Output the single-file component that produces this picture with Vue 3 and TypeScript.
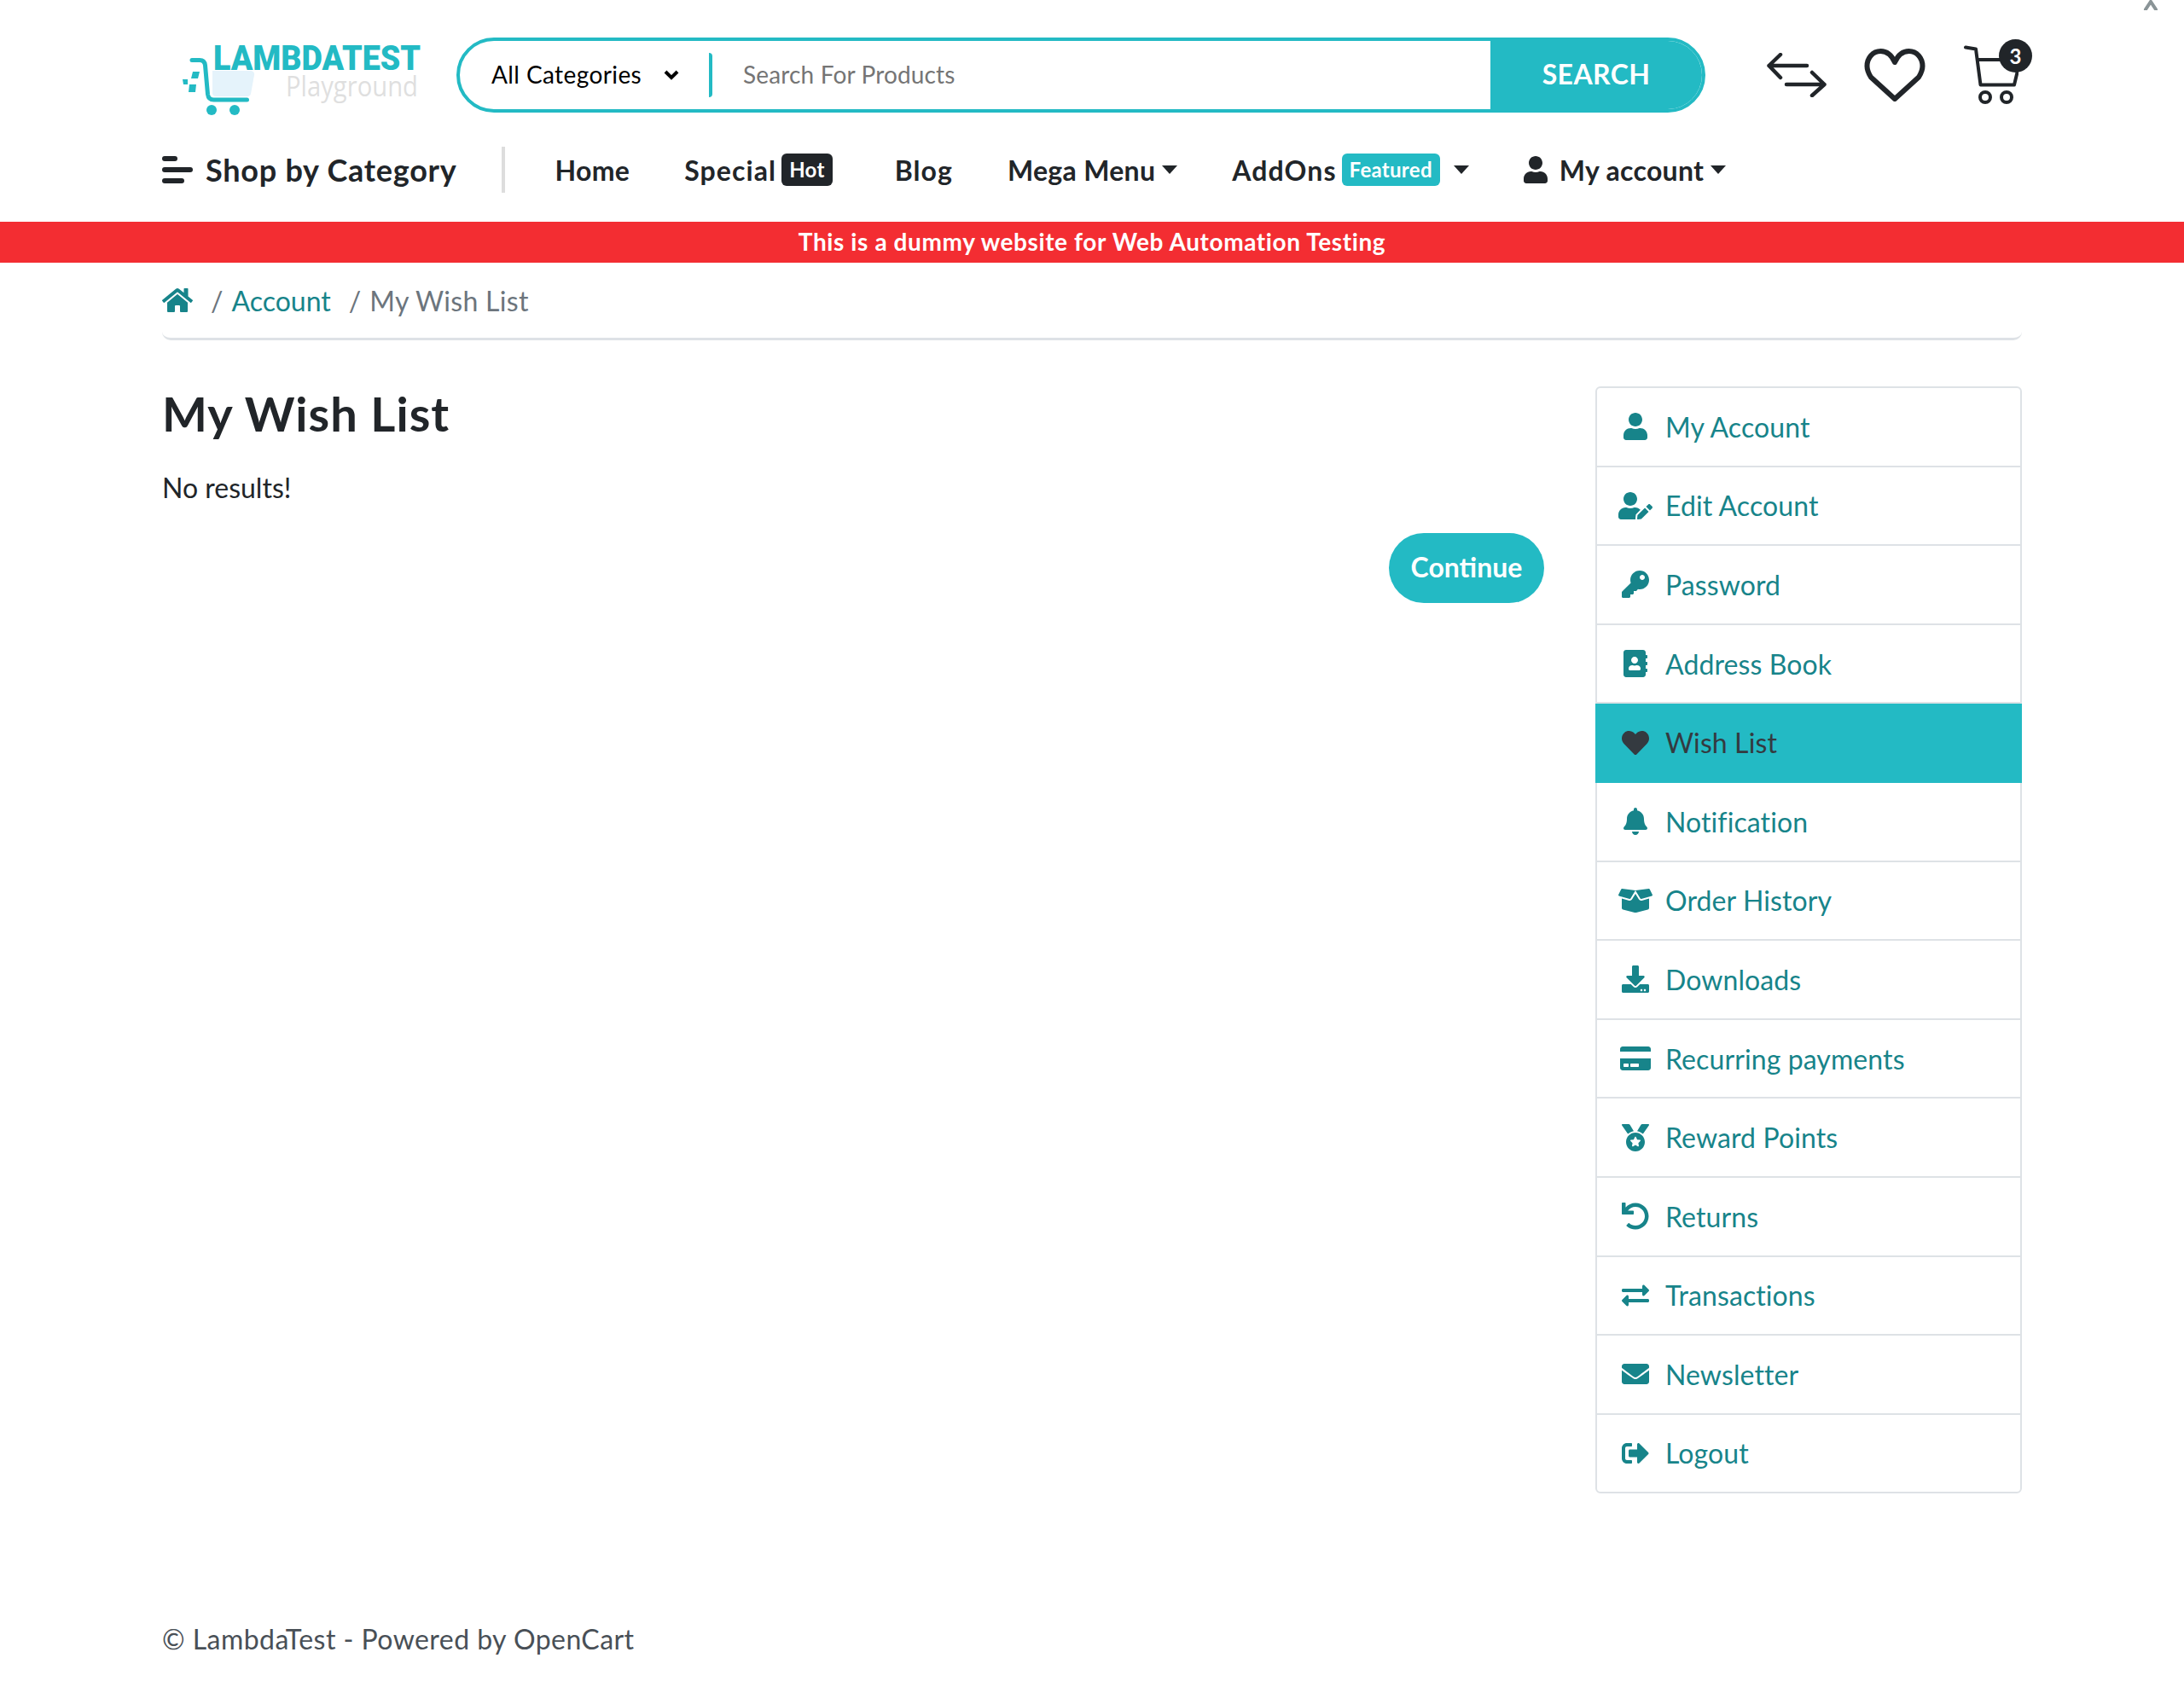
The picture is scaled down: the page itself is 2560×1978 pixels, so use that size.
<script setup lang="ts">
interface MenuItem {
  label: string
  box: string
  d: string
  active?: boolean
}

const userPath =
  'M224 256c70.7 0 128-57.3 128-128S294.7 0 224 0 96 57.3 96 128s57.3 128 128 128zm89.6 32h-16.7c-22.2 10.2-46.9 16-72.9 16s-50.6-5.8-72.9-16h-16.7C60.2 288 0 348.2 0 422.4V464c0 26.5 21.5 48 48 48h352c26.5 0 48-21.5 48-48v-41.6c0-74.2-60.2-134.4-134.4-134.4z'

const homePath =
  'M280.37 148.26L96 300.11V464a16 16 0 0 0 16 16l112.06-.29a16 16 0 0 0 15.92-16V368a16 16 0 0 1 16-16h64a16 16 0 0 1 16 16v95.64a16 16 0 0 0 16 16.05L464 480a16 16 0 0 0 16-16V300L295.67 148.26a12.19 12.19 0 0 0-15.3 0zM571.6 251.47L488 182.56V44.05a12 12 0 0 0-12-12h-56a12 12 0 0 0-12 12v72.61L318.47 43a48 48 0 0 0-61 0L4.34 251.47a12 12 0 0 0-1.6 16.9l25.5 31A12 12 0 0 0 45.15 301l235.22-193.74a12.19 12.19 0 0 1 15.3 0L530.9 301a12 12 0 0 0 16.9-1.6l25.5-31a12 12 0 0 0-1.7-16.93z'

const menu: MenuItem[] = [
  { label: 'My Account', box: '0 0 448 512', d: userPath },
  {
    label: 'Edit Account',
    box: '0 0 640 512',
    d: 'M224 256c70.7 0 128-57.3 128-128S294.7 0 224 0 96 57.3 96 128s57.3 128 128 128zm89.6 32h-16.7c-22.2 10.2-46.9 16-72.9 16s-50.6-5.8-72.9-16h-16.7C60.2 288 0 348.2 0 422.4V464c0 26.5 21.5 48 48 48h274.9c-2.4-6.8-3.4-14-2.6-21.3l6.8-60.9 1.2-11.1 7.9-7.9 77.3-77.3c-24.5-27.7-60-45.5-99.9-45.5zm45.3 145.3l-6.8 61c-1.1 10.2 7.5 18.8 17.6 17.6l60.9-6.8 137.9-137.9-71.7-71.7-137.9 137.8zM633 268.9L595.1 231c-9.3-9.3-24.5-9.3-33.8 0l-37.8 37.8-4.1 4.1 71.8 71.7 41.8-41.8c9.3-9.4 9.3-24.5 0-33.9z',
  },
  {
    label: 'Password',
    box: '0 0 512 512',
    d: 'M512 176.001C512 273.203 433.202 352 336 352c-11.22 0-22.19-1.062-32.827-3.069l-24.012 27.014A23.999 23.999 0 0 1 261.223 384H224v40c0 13.255-10.745 24-24 24h-40v40c0 13.255-10.745 24-24 24H24c-13.255 0-24-10.745-24-24v-78.059c0-6.365 2.529-12.47 7.029-16.971l161.802-161.802C163.108 213.814 160 195.271 160 176 160 78.798 238.797.001 335.999 0 433.488-.001 512 78.511 512 176.001zM336 128c0 26.51 21.49 48 48 48s48-21.49 48-48-21.49-48-48-48-48 21.49-48 48z',
  },
  {
    label: 'Address Book',
    box: '0 0 448 512',
    d: 'M436 160c6.6 0 12-5.4 12-12v-40c0-6.6-5.4-12-12-12h-20V48c0-26.5-21.5-48-48-48H48C21.5 0 0 21.5 0 48v416c0 26.5 21.5 48 48 48h320c26.5 0 48-21.5 48-48v-48h20c6.6 0 12-5.4 12-12v-40c0-6.6-5.4-12-12-12h-20v-64h20c6.6 0 12-5.4 12-12v-40c0-6.6-5.4-12-12-12h-20v-64h20zm-228-32c35.3 0 64 28.7 64 64s-28.7 64-64 64-64-28.7-64-64 28.7-64 64-64zm112 236.8c0 10.6-10 19.2-22.4 19.2H118.4C106 384 96 375.4 96 364.8v-19.2c0-31.8 30.1-57.6 67.2-57.6h5c12.3 5.1 25.7 8 39.8 8s27.6-2.9 39.8-8h5c37.1 0 67.2 25.8 67.2 57.6v19.2z',
  },
  {
    label: 'Wish List',
    box: '0 0 512 512',
    active: true,
    d: 'M462.3 62.6C407.5 15.9 326 24.3 275.7 76.2L256 96.5l-19.7-20.3C186.1 24.3 104.5 15.9 49.7 62.6c-62.8 53.6-66.1 149.8-9.9 207.9l193.5 199.8c12.5 12.9 32.8 12.9 45.3 0l193.5-199.8c56.3-58.1 53-154.3-9.8-207.9z',
  },
  {
    label: 'Notification',
    box: '0 0 448 512',
    d: 'M224 512c35.32 0 63.97-28.65 63.97-64H160.03c0 35.35 28.65 64 63.97 64zm215.39-149.71c-19.32-20.76-55.47-51.99-55.47-154.29 0-77.7-54.48-139.9-127.94-155.16V32c0-17.67-14.32-32-31.98-32s-31.98 14.33-31.98 32v20.84C118.56 68.1 64.08 130.3 64.08 208c0 102.3-36.15 133.53-55.47 154.29-6 6.45-8.66 14.16-8.61 21.71.11 16.4 12.98 32 32.1 32h383.8c19.12 0 32-15.6 32.1-32 .05-7.55-2.61-15.27-8.61-21.71z',
  },
  {
    label: 'Order History',
    box: '0 0 640 512',
    d: 'M425.7 256c-16.9 0-32.8-9-41.4-23.4L320 126l-64.2 106.6c-8.7 14.5-24.6 23.5-41.5 23.5-4.5 0-9-.6-13.3-1.9L64 215v178c0 14.7 10 27.5 24.2 31l216.2 54.1c10.2 2.5 20.9 2.5 31 0L551.8 424c14.2-3.6 24.2-16.4 24.2-31V215l-137 39.1c-4.3 1.3-8.8 1.9-13.3 1.9zm212.6-112.2L586.8 41c-3.1-6.2-9.8-9.8-16.7-8.9L320 64l91.7 152.1c3.8 6.3 11.4 9.3 18.5 7.3l197.9-56.5c9.9-2.9 14.7-13.9 10.2-23.1zM53.2 41L1.7 143.8c-4.6 9.2.3 20.2 10.1 23l197.9 56.5c7.1 2 14.7-1 18.5-7.3L320 64 69.8 32.1c-6.9-.8-13.5 2.7-16.6 8.9z',
  },
  {
    label: 'Downloads',
    box: '0 0 512 512',
    d: 'M216 0h80c13.3 0 24 10.7 24 24v168h87.7c17.8 0 26.7 21.5 14.1 34.1L269.7 378.3c-7.5 7.5-19.8 7.5-27.3 0L90.1 226.1c-12.6-12.6-3.7-34.1 14.1-34.1H192V24c0-13.3 10.7-24 24-24zm296 376v112c0 13.3-10.7 24-24 24H24c-13.3 0-24-10.7-24-24V376c0-13.3 10.7-24 24-24h146.7l49 49c20.1 20.1 52.5 20.1 72.6 0l49-49H488c13.3 0 24 10.7 24 24zm-124 88c0-11-9-20-20-20s-20 9-20 20 9 20 20 20 20-9 20-20zm64 0c0-11-9-20-20-20s-20 9-20 20 9 20 20 20 20-9 20-20z',
  },
  {
    label: 'Recurring payments',
    box: '0 0 576 512',
    d: 'M0 432c0 26.5 21.5 48 48 48h480c26.5 0 48-21.5 48-48V256H0v176zm192-68c0-6.6 5.4-12 12-12h136c6.6 0 12 5.4 12 12v40c0 6.6-5.4 12-12 12H204c-6.6 0-12-5.4-12-12v-40zm-128 0c0-6.6 5.4-12 12-12h72c6.6 0 12 5.4 12 12v40c0 6.6-5.4 12-12 12H76c-6.6 0-12-5.4-12-12v-40zM576 80v48H0V80c0-26.5 21.5-48 48-48h480c26.5 0 48 21.5 48 48z',
  },
  {
    label: 'Reward Points',
    box: '0 0 512 512',
    d: 'M223.75 130.75L154.62 15.54A31.997 31.997 0 0 0 127.18 0H16.03C3.08 0-4.5 14.57 2.92 25.18l111.27 158.96c29.72-27.77 67.52-46.83 109.56-53.39zM495.97 0H384.82c-11.24 0-21.66 5.9-27.44 15.54l-69.13 115.21c42.04 6.56 79.84 25.62 109.56 53.38L509.08 25.18C516.5 14.57 508.92 0 495.97 0zM256 160c-97.2 0-176 78.8-176 176s78.8 176 176 176 176-78.8 176-176-78.8-176-176-176zm92.52 157.26l-37.93 36.96 8.97 52.22c1.6 9.36-8.26 16.51-16.65 12.09L256 393.88l-46.9 24.65c-8.4 4.45-18.25-2.74-16.65-12.09l8.97-52.22-37.93-36.96c-6.82-6.64-3.05-18.23 6.35-19.59l52.43-7.64 23.43-47.52c2.11-4.28 6.19-6.39 10.28-6.39 4.11 0 8.22 2.14 10.33 6.39l23.43 47.52 52.43 7.64c9.4 1.36 13.17 12.95 6.35 19.59z',
  },
  {
    label: 'Returns',
    box: '0 0 512 512',
    d: 'M212.333 224.333H12c-6.627 0-12-5.373-12-12V12C0 5.373 5.373 0 12 0h48c6.627 0 12 5.373 12 12v78.112C117.773 39.279 184.26 7.47 258.175 8.007c136.906.994 246.448 111.623 246.157 248.532C504.041 393.258 393.12 504 256.333 504c-64.089 0-122.496-24.313-166.51-64.215-5.099-4.622-5.334-12.554-.467-17.42l33.967-33.967c4.474-4.474 11.662-4.717 16.401-.525C170.76 415.336 211.58 432 256.333 432c97.268 0 176-78.716 176-176 0-97.267-78.716-176-176-176-58.496 0-110.28 28.476-142.274 72.333h98.274c6.627 0 12 5.373 12 12v48c0 6.627-5.373 12-12 12z',
  },
  {
    label: 'Transactions',
    box: '0 0 512 512',
    d: 'M0 168v-16c0-13.255 10.745-24 24-24h360V80c0-21.367 25.899-32.042 40.971-16.971l80 80c9.372 9.373 9.372 24.569 0 33.941l-80 80C409.956 271.982 384 261.456 384 240v-48H24c-13.255 0-24-10.745-24-24zm488 152H128v-48c0-21.314-25.862-32.08-40.971-16.971l-80 80c-9.372 9.373-9.372 24.569 0 33.941l80 80C102.057 463.997 128 453.437 128 432v-48h360c13.255 0 24-10.745 24-24v-16c0-13.255-10.745-24-24-24z',
  },
  {
    label: 'Newsletter',
    box: '0 0 512 512',
    d: 'M502.3 190.8c3.9-3.1 9.7-.2 9.7 4.7V400c0 26.5-21.5 48-48 48H48c-26.5 0-48-21.5-48-48V195.6c0-5 5.7-7.8 9.7-4.7 22.4 17.4 52.1 39.5 154.1 113.6 21.1 15.4 56.7 47.8 92.2 47.6 35.7.3 72-32.8 92.3-47.6 102-74.1 131.6-96.3 154-113.7zM256 320c23.2.4 56.6-29.2 73.4-41.4 132.7-96.3 142.8-104.7 173.4-128.7 5.8-4.5 9.2-11.5 9.2-18.9v-19c0-26.5-21.5-48-48-48H48C21.5 64 0 85.5 0 112v19c0 7.4 3.4 14.3 9.2 18.9 30.6 23.9 40.7 32.4 173.4 128.7 16.8 12.2 50.2 41.8 73.4 41.4z',
  },
  {
    label: 'Logout',
    box: '0 0 512 512',
    d: 'M497 273L329 441c-15 15-41 4.5-41-17v-96H152c-13.3 0-24-10.7-24-24v-96c0-13.3 10.7-24 24-24h136V88c0-21.4 25.9-32 41-17l168 168c9.3 9.4 9.3 24.6 0 34zM192 436v-40c0-6.6-5.4-12-12-12H96c-17.7 0-32-14.3-32-32V160c0-17.7 14.3-32 32-32h84c6.6 0 12-5.4 12-12V76c0-6.6-5.4-12-12-12H96c-53 0-96 43-96 96v192c0 53 43 96 96 96h84c6.6 0 12-5.4 12-12z',
  },
]
</script>

<template>
  <div class="page">
    <svg class="close-x" viewBox="0 0 18 12" width="18" height="12">
      <path d="M3 11 9 2l6 9" fill="none" stroke="#8a9497" stroke-width="4" stroke-linecap="round" />
    </svg>

    <header class="wrap">
      <div class="top-row">
        <svg class="logo" viewBox="0 0 290 90" width="290" height="90" role="img" aria-label="LambdaTest Playground">
          <path d="M42 29h45a4 4 0 0 1 4 5l-4 22a4 4 0 0 1-4 3H46a4 4 0 0 1-4-4z" fill="#e5f3fb" />
          <path
            d="M18 16.500h9c4 0 6 2 6.500 6l3 34c.5 4 3 6.500 7 6.500h39"
            fill="none"
            stroke="#23bac4"
            stroke-width="5"
            stroke-linecap="round"
          />
          <circle cx="41" cy="75" r="6" fill="#23bac4" />
          <circle cx="68" cy="75" r="6" fill="#23bac4" />
          <path d="M19 30h8l-2 8h-8zM7 39h6v6H8zM15 45h8l-1 9h-8z" fill="#23bac4" />
          <text x="43" y="28" class="logo-main" textLength="243" lengthAdjust="spacingAndGlyphs">LAMBDATEST</text>
          <text x="128" y="59" class="logo-sub" textLength="155" lengthAdjust="spacingAndGlyphs">Playground</text>
        </svg>

        <div class="search">
          <div class="cat">
            <span>All Categories</span>
            <svg viewBox="0 0 18 12" width="18" height="12">
              <path d="M2 2l7 7 7-7" fill="none" stroke="#000" stroke-width="4" />
            </svg>
          </div>
          <div class="search-input">Search For Products</div>
          <div class="search-btn">SEARCH</div>
        </div>

        <div class="head-icons">
          <svg viewBox="0 0 70 52" width="70" height="52" class="ico-compare">
            <path
              d="M16 2 2.500 15 16 29M2.500 15H47M53 23 67.500 37 53 50M67.500 37H23"
              fill="none"
              stroke="#212529"
              stroke-width="4.500"
              stroke-linecap="round"
              stroke-linejoin="round"
            />
          </svg>
          <svg viewBox="0 0 72 62" width="72" height="62" class="ico-heart">
            <path
              d="M36 16C32 7 26 3 19.500 3 10 3 3.500 11 3.500 20.500c0 5.500 2 9 4.500 13L36 59l28-25.500c2.500-4 4.500-7.500 4.500-13C68.500 11 62 3 52.500 3 46 3 40 7 36 16z"
              fill="none"
              stroke="#212529"
              stroke-width="6"
              stroke-linejoin="round"
            />
          </svg>
          <div class="cart">
            <svg viewBox="0 0 64 70" width="64" height="70">
              <path
                d="M2 2.500l12 2 5.500 42H59L63 30M17 17h30"
                fill="none"
                stroke="#212529"
                stroke-width="4"
                stroke-linecap="round"
                stroke-linejoin="round"
              />
              <circle cx="25" cy="61" r="6" fill="none" stroke="#212529" stroke-width="4" />
              <circle cx="50" cy="61" r="6" fill="none" stroke="#212529" stroke-width="4" />
            </svg>
            <span class="cart-badge">3</span>
          </div>
        </div>
      </div>

      <nav class="nav">
        <div class="shop">
          <span class="burger"><i /><i /><i /></span>
          <span>Shop by Category</span>
        </div>
        <a class="nav-link">Home</a>
        <a class="nav-link"><span class="wide">Special</span><span class="tag tag-dark">Hot</span></a>
        <a class="nav-link blog"><span class="wide">Blog</span></a>
        <a class="nav-link">Mega Menu<i class="caret" /></a>
        <a class="nav-link"><span class="wide">AddOns</span><span class="tag tag-teal">Featured</span><i class="caret caret-far" /></a>
        <a class="nav-link">
          <svg class="nav-user" viewBox="0 0 448 512" width="28" height="32"><path :d="userPath" fill="#212529" /></svg>
          My account<i class="caret" />
        </a>
      </nav>
    </header>

    <div class="notice">This is a dummy website for Web Automation Testing</div>

    <div class="wrap">
      <div class="crumbs">
        <svg viewBox="0 0 576 512" width="36" height="32"><path :d="homePath" fill="#17848a" /></svg>
        <span class="sep">/</span>
        <a>Account</a>
        <span class="sep">/</span>
        <span class="current">My Wish List</span>
      </div>

      <div class="columns">
        <main class="content">
          <h1>My Wish List</h1>
          <p>No results!</p>
          <div class="actions">
            <button class="continue" type="button">Continue</button>
          </div>
        </main>

        <aside class="side">
          <a v-for="item in menu" :key="item.label" class="side-row" :class="{ active: item.active }">
            <span class="side-ico">
              <svg :viewBox="item.box" height="32"><path :d="item.d" fill="currentColor" /></svg>
            </span>
            {{ item.label }}
          </a>
        </aside>
      </div>

      <footer class="foot">© LambdaTest - Powered by OpenCart</footer>
    </div>
  </div>
</template>

<style>
body {
  margin: 0;
  background: #fff;
}
</style>

<style scoped>
.page {
  position: relative;
  font-family: Lato, 'Open Sans', sans-serif;
  font-size: 32px;
  color: #212529;
  overflow: hidden;
}

.close-x {
  position: absolute;
  top: 0;
  left: 2512px;
}

.wrap {
  width: 2180px;
  margin: 0 auto;
}

.top-row {
  display: flex;
  align-items: flex-start;
  height: 88px;
  padding-top: 44px;
}

.logo {
  flex: none;
  width: 290px;
  height: 90px;
  margin: 10px 38px 0 17px;
  overflow: visible;
}

.logo-main {
  font-family: Roboto, sans-serif;
  font-weight: 900;
  font-size: 40px;
  fill: #23bac4;
}

.logo-sub {
  font-family: 'Open Sans', sans-serif;
  font-size: 32px;
  fill: #dfdfdf;
}

.search {
  box-sizing: border-box;
  display: flex;
  align-items: center;
  width: 1464px;
  height: 88px;
  border: 4px solid #23bac4;
  border-radius: 44px;
  overflow: hidden;
}

.cat {
  display: flex;
  align-items: center;
  justify-content: space-between;
  box-sizing: border-box;
  width: 296px;
  height: 52px;
  padding: 0 35px 0 37px;
  border-right: 4px solid #23bac4;
  border-radius: 0 4px 4px 0;
  color: #000;
  font-size: 28px;
  letter-spacing: 0.4px;
}

.cat span,
.search-input {
  padding-bottom: 3px;
}

.search-input {
  flex: 1;
  padding-left: 36px;
  color: #757575;
  font-size: 28px;
  letter-spacing: 0.15px;
}

.search-btn {
  display: flex;
  align-items: center;
  justify-content: center;
  box-sizing: border-box;
  width: 248px;
  height: 100%;
  padding-bottom: 3px;
  background: #23bac4;
  color: #fff;
  font-weight: 700;
  font-size: 32px;
  letter-spacing: 0.4px;
}

.head-icons {
  display: flex;
  align-items: center;
  height: 88px;
  margin-left: 72px;
}

.ico-heart {
  margin-left: 44px;
  margin-top: -1px;
}

.cart {
  position: relative;
  display: flex;
  margin-left: 45px;
  margin-top: -1px;
}

.cart-badge {
  position: absolute;
  top: -7px;
  left: 41px;
  width: 39px;
  height: 39px;
  border-radius: 50%;
  background: #212529;
  color: #fff;
  font-weight: 700;
  font-size: 24px;
  line-height: 39px;
  text-align: center;
}

.nav {
  display: flex;
  align-items: center;
  height: 122px;
  padding-top: 6px;
}

.shop {
  display: flex;
  align-items: center;
  gap: 15px;
  height: 54px;
  padding-right: 52px;
  margin-right: 27px;
  border-right: 4px solid #ddd;
  font-size: 36px;
  font-weight: 700;
  letter-spacing: 0.75px;
}

.burger {
  display: flex;
  flex-direction: column;
  gap: 7px;
  width: 36px;
}

.burger i {
  display: block;
  height: 6px;
  border-radius: 3px;
  background: #212529;
}

.burger i:nth-child(1) {
  width: 18px;
}

.burger i:nth-child(3) {
  width: 26px;
}

.nav-link {
  display: flex;
  align-items: center;
  padding: 0 32px;
  font-weight: 700;
  color: #212529;
  letter-spacing: 0.3px;
}

.wide {
  letter-spacing: 1.1px;
}

.blog {
  padding-left: 41px;
}

.tag {
  margin-left: 6px;
  padding: 0 9px;
  height: 38px;
  border-radius: 6px;
  color: #fff;
  font-size: 24px;
  line-height: 38px;
  font-weight: 700;
}

.tag-dark {
  background: #212529;
}

.tag-teal {
  background: #23bac4;
}

.caret {
  display: block;
  width: 0;
  height: 0;
  margin-left: 8px;
  border-top: 10px solid #212529;
  border-left: 9px solid transparent;
  border-right: 9px solid transparent;
}

.caret-far {
  margin-left: 16px;
}

.nav-user {
  margin-right: 14px;
}

.notice {
  height: 48px;
  background: #f32d32;
  color: #fff;
  font-size: 28px;
  font-weight: 700;
  line-height: 46px;
  text-align: center;
  letter-spacing: 0.6px;
}

.crumbs {
  display: flex;
  align-items: center;
  height: 88px;
  border-bottom: 3px solid #dee2e6;
  border-radius: 0 0 10px 10px;
}

.crumbs a {
  color: #17848a;
}

.sep {
  margin: 0 10px 0 21px;
  color: #6c757d;
  font-weight: 400;
}

.current {
  color: #6c757d;
  letter-spacing: 0.3px;
}

.columns {
  display: flex;
  gap: 60px;
  padding-top: 54px;
}

.content {
  flex: 1;
}

h1 {
  margin: 0 0 30px;
  font-size: 56px;
  font-weight: 700;
  line-height: 64px;
  letter-spacing: 1px;
}

.content p {
  margin: 0;
  padding-top: 1px;
  line-height: 47px;
}

.actions {
  display: flex;
  justify-content: flex-end;
  margin-top: 30px;
}

.continue {
  width: 182px;
  height: 82px;
  padding: 0 0 3px;
  border: 0;
  border-radius: 41px;
  background: #23bac4;
  color: #fff;
  font-family: inherit;
  font-size: 32px;
  font-weight: 700;
}

.side {
  flex: none;
  box-sizing: border-box;
  width: 500px;
  border: 2px solid #dee2e6;
  border-radius: 6px;
}

.side-row {
  display: flex;
  align-items: center;
  box-sizing: border-box;
  height: 92.6px;
  padding-left: 25px;
  border-bottom: 2px solid #dee2e6;
  color: #17848a;
  letter-spacing: 0.1px;
}

.side-row:last-child {
  height: 90px;
  border-bottom: 0;
}

.side-row.active {
  margin: 0 -2px;
  padding-left: 27px;
  background: #23bac4;
  border-bottom-color: #23bac4;
  color: #343a40;
}

.side-ico {
  display: flex;
  justify-content: center;
  width: 40px;
  margin-right: 15px;
}

.foot {
  margin-top: 147px;
  padding-bottom: 32px;
  color: #495057;
  line-height: 48px;
  letter-spacing: 0.45px;
}
</style>
